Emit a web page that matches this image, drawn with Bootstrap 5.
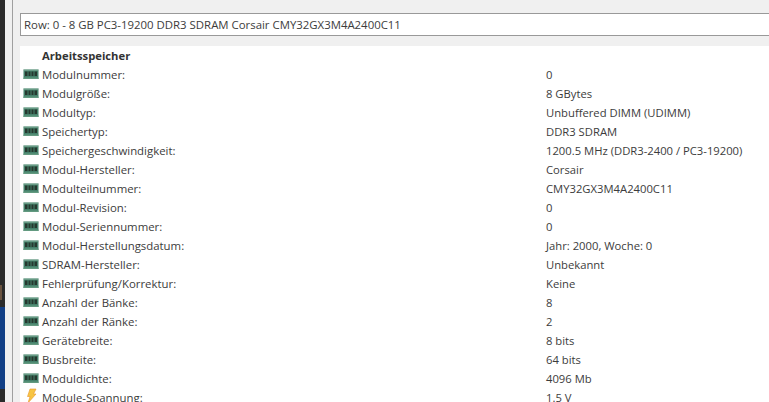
<!DOCTYPE html>
<html lang="de">
  <head>
    <meta charset="UTF-8" />
    <title>Arbeitsspeicher</title>
    <link
      rel="stylesheet"
      href="https://cdn.jsdelivr.net/npm/bootstrap@5.3.2/dist/css/bootstrap.min.css"
    />
    <style>
      html, body { height: 402px; overflow: hidden; background: #f0f0f0; }
      body { font-family: "Open Sans", "Noto Sans", sans-serif; font-size: 11.4px; color: #3c3c3c; }
      .desk-strip { width: 5px; height: 402px; background: #2b2b2b; }
      .desk-brown { width: 2px; height: 15px; margin-top: 285px; background: #6a5340; }
      .desk-blue { height: 82px; margin-top: 7px; background: #123f86; }
      .win-gap { width: 7px; }
      .win-body { border-left: 1px solid #a0a0a0; padding-left: 7px; min-width: 0; }
      .row-select { height: 23px; margin: 13px 0 10px 0; background: #fff; border: 1px solid #999; border-right: 0; padding-left: 3px; line-height: 21px; white-space: nowrap; }
      .info-panel { background: #fff; }
      .info-row { height: 19px; line-height: 19px; white-space: nowrap; }
      .info-ico { width: 16px; height: 19px; margin: 0 3px 0 3px; flex: none; }
      .info-name { width: 504px; flex: none; }
      .info-val { font-size: 11.25px; }
      .info-head { font-weight: 700; font-size: 11.25px; padding-left: 22px; color: #333; }
    </style>
  </head>
  <body>
    <div class="d-flex">
      <div class="desk-strip flex-shrink-0"><div class="desk-brown"></div><div class="desk-blue"></div></div>
      <div class="win-gap flex-shrink-0"></div>
      <div class="win-body flex-grow-1">
        <div class="row-select">Row: 0 - 8 GB PC3-19200 DDR3 SDRAM Corsair CMY32GX3M4A2400C11</div>
        <div class="info-panel" id="infoPanel">
          <div class="info-row info-head">Arbeitsspeicher</div>
        </div>
      </div>
    </div>
    <script>
      const rows = [
        ["Modulnummer:", "0"],
        ["Modulgröße:", "8 GBytes"],
        ["Modultyp:", "Unbuffered DIMM (UDIMM)"],
        ["Speichertyp:", "DDR3 SDRAM"],
        ["Speichergeschwindigkeit:", "1200.5 MHz (DDR3-2400 / PC3-19200)"],
        ["Modul-Hersteller:", "Corsair"],
        ["Modulteilnummer:", "CMY32GX3M4A2400C11"],
        ["Modul-Revision:", "0"],
        ["Modul-Seriennummer:", "0"],
        ["Modul-Herstellungsdatum:", "Jahr: 2000, Woche: 0"],
        ["SDRAM-Hersteller:", "Unbekannt"],
        ["Fehlerprüfung/Korrektur:", "Keine"],
        ["Anzahl der Bänke:", "8"],
        ["Anzahl der Ränke:", "2"],
        ["Gerätebreite:", "8 bits"],
        ["Busbreite:", "64 bits"],
        ["Moduldichte:", "4096 Mb"],
        ["Module-Spannung:", "1.5 V", true],
      ];
      const ramIcon = `<svg class="info-ico" viewBox="0 0 16 19"><rect x="0.5" y="4.5" width="15" height="9.5" fill="#44806a"/><rect x="0.5" y="4.5" width="15" height="1" fill="#8ab39f"/><path d="M2 6.5h2.5v4.5H2zM5.5 6.5h2v4.5h-2zM8.5 6.5h2v4.5h-2zM11.5 6.5H14v4.5h-2.5z" fill="#26382f"/><rect x="0.5" y="12.5" width="15" height="1.5" fill="#639a80"/></svg>`;
      const boltIcon = `<svg class="info-ico" viewBox="0 0 16 19"><path d="M7 1h6l-2.5 5H13L5 15l2-6.5H4.5z" fill="#f7c543" stroke="#e8962a" stroke-width=".6"/></svg>`;
      const panel = document.getElementById("infoPanel");
      rows.forEach((r) => {
        const div = document.createElement("div");
        div.className = "info-row d-flex";
        div.innerHTML = `${r[2] ? boltIcon : ramIcon}<div class="info-name">${r[0]}</div><div class="info-val">${r[1]}</div>`;
        panel.appendChild(div);
      });
    </script>
    <script src="https://cdn.jsdelivr.net/npm/bootstrap@5.3.2/dist/js/bootstrap.bundle.min.js"></script>
  </body>
</html>
